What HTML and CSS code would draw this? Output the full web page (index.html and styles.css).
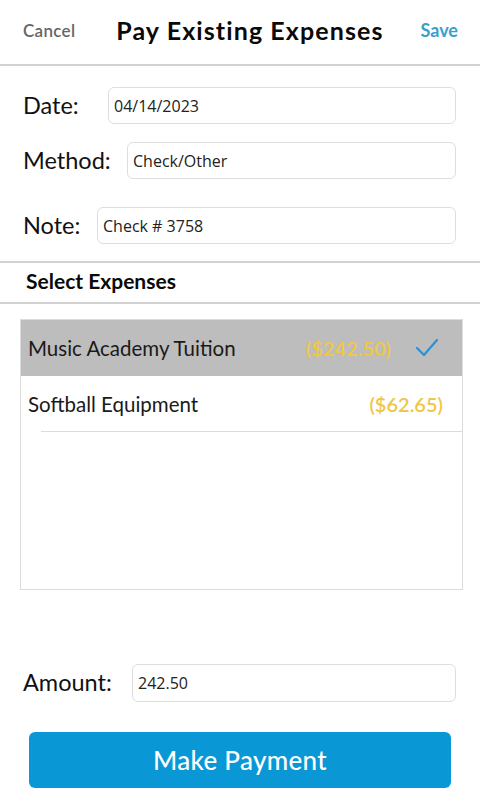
FILE: index.html
```html
<!DOCTYPE html>
<html>
<head>
<meta charset="utf-8">
<link rel="stylesheet" href="styles.css">
</head>
<body>
<div class="screen">
  <header class="topbar">
    <span class="cancel">Cancel</span>
    <span class="title">Pay Existing Expenses</span>
    <span class="save">Save</span>
  </header>

  <div class="form">
    <div class="field field-date">
      <label class="label">Date:</label>
      <div class="input">04/14/2023</div>
    </div>
    <div class="field field-method">
      <label class="label">Method:</label>
      <div class="input">Check/Other</div>
    </div>
    <div class="field field-note">
      <label class="label">Note:</label>
      <div class="input">Check # 3758</div>
    </div>
  </div>

  <div class="section-head">Select Expenses</div>

  <div class="list">
    <div class="row selected">
      <span class="name">Music Academy Tuition</span>
      <span class="amt">($242.50)</span>
      <svg class="check" width="24" height="20" viewBox="0 0 24 20"><polyline points="2,10 9,17 22,2" fill="none" stroke="#2e8fd2" stroke-width="2.2" stroke-linecap="round" stroke-linejoin="round"/></svg>
    </div>
    <div class="row second">
      <span class="name">Softball Equipment</span>
      <span class="amt">($62.65)</span>
    </div>
  </div>

  <div class="form">
    <div class="field field-amount">
      <label class="label">Amount:</label>
      <div class="input">242.50</div>
    </div>
  </div>

  <div class="btn-wrap">
    <button class="pay-btn">Make Payment</button>
  </div>
</div>
</body>
</html>
```

FILE: styles.css
```css
* { box-sizing: border-box; }
html, body {
  margin: 0;
  padding: 0;
  background: #ffffff;
}
body {
  font-family: Lato, "Noto Sans", sans-serif;
  color: #111;
}
.screen {
  width: 480px;
  height: 803px;
  overflow: hidden;
}
.topbar {
  height: 66px;
  border-bottom: 2px solid #d2d2d2;
  display: flex;
  align-items: center;
  justify-content: space-between;
  padding: 0 22px 4px 23px;
}
.cancel {
  font-size: 17px;
  color: #666;
  font-weight: 600;
  letter-spacing: 0.3px;
}
.title {
  font-size: 25px;
  font-weight: 700;
  color: #0a0a0a;
  letter-spacing: 1.1px;
  margin-left: 4px;
}
.save {
  font-size: 18px;
  font-weight: 700;
  color: #3a9fcc;
}
.form {
  padding: 0 24px 0 23px;
}
.field {
  display: flex;
  align-items: center;
}
.field-date { margin-top: 21px; }
.field-method { margin-top: 18px; }
.field-note { margin-top: 28px; }
.field-amount { margin-top: 74px; }
.label {
  font-size: 23.5px;
  color: #111;
  padding-bottom: 2px;
}
.field-date .label { width: 85px; }
.field-method .label { width: 104px; }
.field-note .label { width: 74px; }
.field-amount .label { width: 109px; }
.input {
  flex: 1;
  height: 37px;
  border: 1.5px solid #dedede;
  border-radius: 6px;
  padding: 0 5px;
  display: flex;
  align-items: center;
  font-family: "Open Sans", "Noto Sans", sans-serif;
  font-size: 16px;
  color: #222;
}
.field-amount .input { height: 38px; }
.section-head {
  margin-top: 17px;
  border-top: 2px solid #d2d2d2;
  border-bottom: 2px solid #d2d2d2;
  height: 43px;
  padding-left: 26px;
  padding-bottom: 5px;
  display: flex;
  align-items: center;
  font-size: 21px;
  font-weight: 700;
  color: #0a0a0a;
}
.list {
  margin: 15px 17px 0 20px;
  height: 271px;
  border: 1.5px solid #dcdcdc;
}
.row {
  height: 56px;
  display: flex;
  align-items: center;
  padding-left: 7px;
  position: relative;
}
.row .name {
  font-size: 20.5px;
  color: #1a1a1a;
  flex: 1;
}
.row .amt {
  font-size: 20px;
  font-weight: 600;
  color: #f0c64a;
}
.selected {
  background: #bdbdbd;
}
.selected .amt {
  color: #f1c644;
  margin-right: 24px;
}
.check {
  margin-right: 23px;
}
.second {
  padding-right: 19px;
}
.second::after {
  content: "";
  position: absolute;
  left: 20px;
  right: 0;
  bottom: 0;
  border-bottom: 1.5px solid #dcdcdc;
}
.btn-wrap {
  padding: 0 29px;
  margin-top: 30px;
}
.pay-btn {
  width: 100%;
  height: 56px;
  border: none;
  border-radius: 6px;
  background: #0a97d6;
  color: #fff;
  font-family: Lato, "Noto Sans", sans-serif;
  font-size: 26px;
  font-weight: 500;
  letter-spacing: 0.3px;
}
```
